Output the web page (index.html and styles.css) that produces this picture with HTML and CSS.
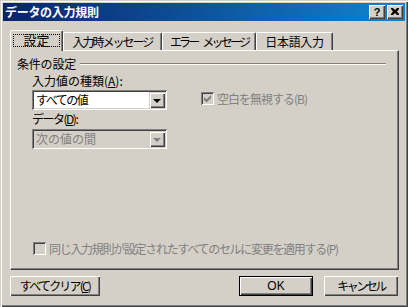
FILE: index.html
```html
<!DOCTYPE html>
<html lang="ja">
<head>
    <meta charset="UTF-8" />
    <link rel="stylesheet" href="styles.css">
</head>
<body>
    <div class="window">
        <div class="titlebar">
            <span class="title">データの入力規則</span>
            <div class="caption-btns">
                <div class="cap-btn help">?</div>
                <div class="cap-btn close">
                    <svg width="8" height="7" viewBox="0 0 8 7">
                        <path d="M0 0h2l2 2 2-2h2v1l-2 2.5 2 2.5v1h-2l-2-2-2 2h-2v-1l2-2.5-2-2.5z" fill="#000"/>
                    </svg>
                </div>
            </div>
        </div>

        <div class="content">
            <div class="tabs">
                <div class="tab selected"><span class="focus">設定</span></div>
                <div class="tab t2">入力時メッセージ</div>
                <div class="tab t3">エラー メッセージ</div>
                <div class="tab t4">日本語入力</div>
            </div>

            <div class="panel">
                <div class="group-head">
                    <span>条件の設定</span>
                    <div class="etched"></div>
                </div>

                <div class="fields">
                    <div class="col">
                        <div class="lbl first">入力値の種類(<u>A</u>):</div>
                        <div class="combo">
                            <span class="combo-text kana">すべての値</span>
                            <div class="drop"><span class="arrow"></span></div>
                        </div>
                        <div class="lbl second kana">データ(<u>D</u>):</div>
                        <div class="combo disabled">
                            <span class="combo-text">次の値の間</span>
                            <div class="drop"><span class="arrow"></span></div>
                        </div>
                    </div>
                    <div class="check ignore">
                        <span class="box checked">
                            <svg width="7" height="7" viewBox="0 0 7 7">
                                <path d="M0 2v3l2 2h1l4-4v-3l-4 4h-1z" fill="#808080"/>
                            </svg>
                        </span>
                        <span class="check-text">空白を無視する(B)</span>
                    </div>
                </div>

                <div class="check apply">
                    <span class="box"></span>
                    <span class="check-text">同じ入力規則が設定されたすべてのセルに変更を適用する(P)</span>
                </div>
            </div>

            <div class="buttons">
                <div class="btn clear">すべてクリア(<u>C</u>)</div>
                <div class="btn ok">OK</div>
                <div class="btn cancel">キャンセル</div>
            </div>
        </div>
    </div>
</body>
</html>
```

FILE: styles.css
```css
body {
    margin: 0;
    background-color: #d4d0c8;
    font-family: "Noto Sans CJK JP", "DejaVu Sans", sans-serif;
    font-size: 12px;
    color: #000;
}

.window {
    width: 408px;
    height: 307px;
    box-sizing: border-box;
    padding: 3px;
    background-color: #d4d0c8;
    box-shadow: inset 1px 1px 0 #d4d0c8, inset 2px 2px 0 #fff, inset -1px -1px 0 #404040, inset -2px -2px 0 #808080;
    display: flex;
    flex-direction: column;
}

.titlebar {
    height: 18px;
    display: flex;
    align-items: center;
    justify-content: space-between;
    background: linear-gradient(to right, #0a246a, #1084d0);
    padding: 0 2px 0 2px;
}

.title {
    color: #fff;
    font-weight: bold;
    font-size: 12px;
    line-height: 14px;
    letter-spacing: -0.3px;
}

.caption-btns {
    display: flex;
    gap: 2px;
}

.cap-btn {
    width: 16px;
    height: 14px;
    box-sizing: border-box;
    background-color: #d4d0c8;
    box-shadow: inset 1px 1px 0 #fff, inset -1px -1px 0 #404040, inset -2px -2px 0 #808080;
    display: flex;
    align-items: center;
    justify-content: center;
    font-family: "Liberation Sans", sans-serif;
    font-weight: bold;
    font-size: 11px;
    line-height: 12px;
}

.close svg {
    display: block;
    margin: 0 0 1px 0;
}

.content {
    flex: 1;
    display: flex;
    flex-direction: column;
    padding: 9px 6px 0 7px;
}

.tabs {
    display: flex;
    align-items: flex-end;
    height: 20px;
    position: relative;
    z-index: 1;
}

.tab {
    height: 18px;
    box-sizing: border-box;
    border-top: 1px solid #fff;
    border-left: 1px solid #fff;
    border-right: 1px solid #404040;
    border-radius: 2px 2px 0 0;
    box-shadow: inset -1px 0 0 #808080;
    display: flex;
    align-items: center;
    justify-content: center;
    line-height: 14px;
    white-space: pre;
}

.tab.selected {
    width: 53px;
    height: 21px;
    margin-bottom: -1px;
    background-color: #d4d0c8;
    padding-bottom: 2px;
}

.focus {
    width: 47px;
    height: 13px;
    box-sizing: border-box;
    border: 1px dotted #000;
    display: flex;
    align-items: center;
    justify-content: center;
    font-size: 13px;
}

.t2 { width: 99px; letter-spacing: -2px; }
.t3 { width: 94px; letter-spacing: -2.8px; word-spacing: 5px; }
.t4 { width: 77px; letter-spacing: -0.3px; }

.panel {
    width: 389px;
    height: 220px;
    box-sizing: border-box;
    border-top: 1px solid #fff;
    border-left: 1px solid #fff;
    border-right: 1px solid #404040;
    border-bottom: 1px solid #404040;
    box-shadow: inset -1px -1px 0 #808080;
    display: flex;
    flex-direction: column;
    padding: 6px 6px 0 6px;
}

.group-head {
    display: flex;
    align-items: center;
    height: 13px;
    line-height: 13px;
    letter-spacing: -0.2px;
}

.etched {
    flex: 1;
    height: 0;
    border-top: 1px solid #808080;
    border-bottom: 1px solid #fff;
    margin: 0 6px 0 4px;
}

.fields {
    display: flex;
    margin-left: 15px;
}

.col {
    width: 135px;
}

.lbl {
    height: 13px;
    line-height: 13px;
}

.lbl.first {
    margin-top: 4px;
    margin-bottom: 3px;
}

.lbl.second {
    margin-top: 2px;
    margin-bottom: 4px;
}

.kana {
    letter-spacing: -1.5px;
}

.combo {
    height: 20px;
    box-sizing: border-box;
    background-color: #fff;
    box-shadow: inset 1px 1px 0 #808080, inset -1px -1px 0 #fff, inset 2px 2px 0 #404040, inset -2px -2px 0 #d4d0c8;
    display: flex;
    align-items: center;
    justify-content: space-between;
    padding: 2px;
}

.combo-text {
    padding-left: 2px;
    font-size: 12px;
    line-height: 14px;
}

.drop {
    width: 16px;
    height: 16px;
    box-sizing: border-box;
    background-color: #d4d0c8;
    box-shadow: inset 1px 1px 0 #d4d0c8, inset 2px 2px 0 #fff, inset -1px -1px 0 #404040, inset -2px -2px 0 #808080;
    display: flex;
    align-items: center;
    justify-content: center;
}

.arrow {
    width: 0;
    height: 0;
    border-left: 4px solid transparent;
    border-right: 4px solid transparent;
    border-top: 4px solid #000;
    margin: 1px 1px 0 0;
}

.combo.disabled {
    background-color: #d4d0c8;
    color: #808080;
}

.combo.disabled .arrow {
    border-top-color: #808080;
}

.check {
    display: flex;
    align-items: center;
    color: #808080;
    gap: 3px;
}

.box {
    width: 13px;
    height: 13px;
    box-sizing: border-box;
    background-color: #d4d0c8;
    box-shadow: inset 1px 1px 0 #808080, inset -1px -1px 0 #fff, inset 2px 2px 0 #404040, inset -2px -2px 0 #d4d0c8;
    display: flex;
    align-items: center;
    justify-content: center;
}

.box svg {
    display: block;
}

.check-text {
    line-height: 13px;
}

.ignore {
    margin-left: 34px;
    margin-top: 22px;
    align-self: flex-start;
}

.ignore .check-text {
    letter-spacing: -1px;
}

.apply {
    margin-top: auto;
    margin-left: 16px;
    margin-bottom: 14px;
}

.apply .check-text {
    letter-spacing: -1.3px;
}

.buttons {
    display: flex;
    margin-top: 6px;
}

.btn {
    height: 20px;
    box-sizing: border-box;
    background-color: #d4d0c8;
    box-shadow: inset 1px 1px 0 #fff, inset -1px -1px 0 #404040, inset -2px -2px 0 #808080;
    display: flex;
    align-items: center;
    justify-content: center;
    line-height: 14px;
}

.clear {
    width: 90px;
    letter-spacing: -1.8px;
}

.ok {
    width: 74px;
    margin-left: auto;
    border: 1px solid #000;
    font-family: "Liberation Sans", sans-serif;
    font-size: 12px;
}

.cancel {
    width: 74px;
    margin-left: 11px;
    margin-right: 1px;
    letter-spacing: -2.5px;
}
```
